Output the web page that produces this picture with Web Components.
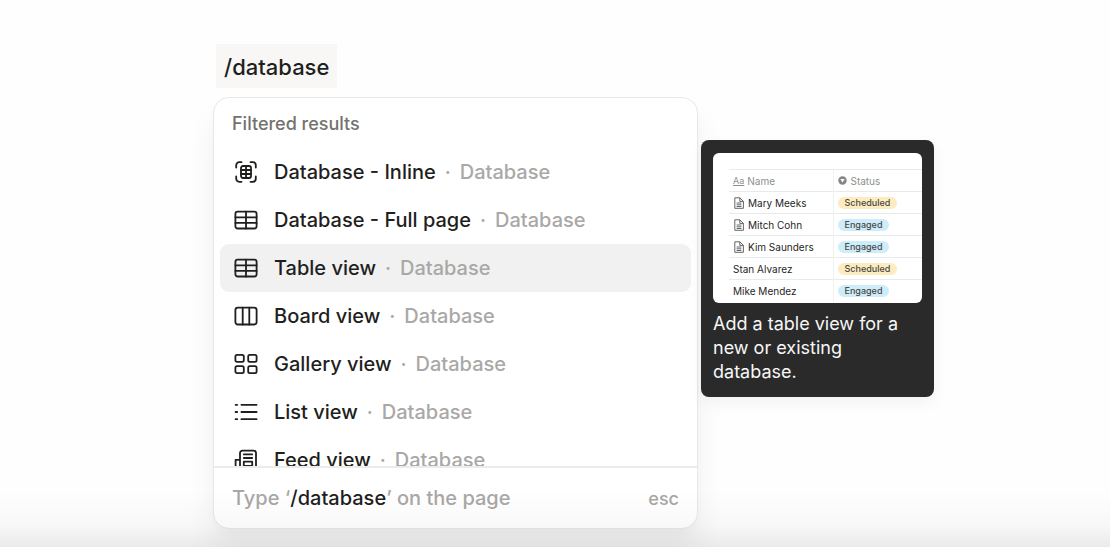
<!DOCTYPE html>
<html lang="en">
<head>
<meta charset="utf-8">
<meta name="viewport" content="width=device-width, initial-scale=1">
<title>Slash command menu</title>
<style>
body { margin: 0; background: #fefefe; font-family: Inter, "Liberation Sans", sans-serif; color: #1f1f1e; }
</style>
</head>
<body>
<editor-page>
  <slash-command slot="command">/database</slash-command>
  <command-menu heading="Filtered results">
    <menu-option icon="inline" hint="Database">Database - Inline</menu-option>
    <menu-option icon="table" hint="Database">Database - Full page</menu-option>
    <menu-option icon="table" hint="Database" active>Table view</menu-option>
    <menu-option icon="board" hint="Database">Board view</menu-option>
    <menu-option icon="gallery" hint="Database">Gallery view</menu-option>
    <menu-option icon="list" hint="Database">List view</menu-option>
    <menu-option icon="feed" hint="Database">Feed view</menu-option>
    <span slot="footer">Type ‘<b>/database</b>’ on the page</span>
    <span slot="key">esc</span>
  </command-menu>
  <preview-card slot="preview">
    <preview-table slot="picture"></preview-table>
    Add a table view for a new or existing database.
  </preview-card>
</editor-page>

<script>
const define = (name, html, setup) => {
  const template = document.createElement('template');
  template.innerHTML = html;
  customElements.define(name, class extends HTMLElement {
    constructor() {
      super();
      this.attachShadow({ mode: 'open' }).append(template.content.cloneNode(true));
    }
    connectedCallback() {
      if (setup) setup(this, this.shadowRoot);
    }
  });
};

const svg = (body) => `<svg viewBox="0 0 24 24" width="24" height="24" fill="none" stroke="currentColor" stroke-width="1.8" stroke-linecap="round" stroke-linejoin="round" aria-hidden="true">${body}</svg>`;

const icons = {
  inline: svg('<path d="M7.5 2.2H5.2a3 3 0 0 0-3 3v2.3M16.5 2.2h2.3a3 3 0 0 1 3 3v2.3M7.5 21.8H5.2a3 3 0 0 1-3-3v-2.3M16.5 21.8h2.3a3 3 0 0 0 3-3v-2.3"/><rect x="7" y="6" width="10" height="12" rx="2"/><path d="M12 6v12M7 10h10M7 14h10"/>'),
  table: svg('<rect x="1.4" y="3.7" width="21.2" height="16.8" rx="2.2"/><path d="M12 3.7v16.8M1.4 9.3h21.2M1.4 14.9h21.2"/>'),
  board: svg('<rect x="1.4" y="3.7" width="21.2" height="16.8" rx="2.4"/><path d="M8.7 3.7v16.8M15.3 3.7v16.8"/>'),
  gallery: svg('<rect x="1.4" y="2.8" width="8.4" height="7" rx="1.6"/><rect x="14.2" y="2.8" width="8.4" height="7" rx="1.6"/><rect x="1.4" y="14.2" width="8.4" height="7" rx="1.6"/><rect x="14.2" y="14.2" width="8.4" height="7" rx="1.6"/>'),
  list: svg('<path d="M1.6 4.8h1.6M1.6 12h1.6M1.6 19.2h1.6M7.4 4.8h15.2M7.4 12h15.2M7.4 19.2h15.2"/>'),
  feed: svg('<path d="M6 20V5a2.4 2.4 0 0 1 2.4-2.4h11.2A2.4 2.4 0 0 1 22 5v14a2.4 2.4 0 0 1-2.4 2.4H4a2.4 2.4 0 0 1-2.4-2.4v-7.2h4.2"/><path d="M9.8 6.4h8.4M9.8 10h8.4"/><rect x="9.8" y="13.6" width="8.4" height="4.4"/>')
};

define('editor-page', `
  <style>
    :host { display: block; box-sizing: border-box; min-height: 100vh; padding: 44px 176px 18px 213px; }
    .command { padding-left: 3px; margin-bottom: 9px; }
    .row { display: flex; align-items: flex-start; gap: 3px; }
    ::slotted(command-menu) { flex: 1; min-width: 0; }
    ::slotted(preview-card) { flex: none; margin-top: 43px; }
    .fade { position: fixed; inset: auto 0 0 0; height: 56px; pointer-events: none; z-index: 2;
      background: linear-gradient(rgba(0,0,0,0), rgba(0,0,0,.025) 60%, rgba(0,0,0,.08)); }
  </style>
  <main>
    <div class="command"><slot name="command"></slot></div>
    <div class="row"><slot></slot><slot name="preview"></slot></div>
  </main>
  <div class="fade"></div>`);

define('slash-command', `
  <style>
    :host { display: flex; }
    span { background: #f8f7f6; padding: 9px 8px 7px; font-size: 22px; line-height: 28px; font-weight: 500; }
  </style>
  <span><slot></slot></span>`);

define('command-menu', `
  <style>
    :host { display: block; }
    section { box-sizing: border-box; border: 1px solid #e8e8e7; border-radius: 16px; background: #fff; overflow: hidden;
      box-shadow: 0 20px 30px rgba(0,0,0,.06), 0 4px 10px rgba(0,0,0,.02); }
    h2 { margin: 0; padding: 14px 18px 12px; font-size: 18px; line-height: 24px; font-weight: 500; color: #73726e; }
    .list { height: 318px; overflow: hidden; padding: 0 6px; }
    footer { display: flex; justify-content: space-between; align-items: center; padding: 16px 18px 15px; border-top: 2px solid #ececeb;
      color: #a9a8a6; font-size: 20px; line-height: 29px; font-weight: 450; }
    ::slotted([slot=key]) { font-size: 18px; }
  </style>
  <section>
    <h2></h2>
    <div class="list" role="menu"><slot></slot></div>
    <footer><slot name="footer"></slot><slot name="key"></slot></footer>
  </section>`, (host, root) => {
  root.querySelector('h2').textContent = host.getAttribute('heading');
  const strong = host.querySelector('b');
  strong.style.fontWeight = '500';
  strong.style.color = '#1f1f1e';
});

define('menu-option', `
  <style>
    :host { display: block; }
    button { display: flex; align-items: center; width: 100%; height: 48px; padding: 0 14px; border: 0; border-radius: 9px;
      background: none; font: inherit; font-size: 20px; line-height: 28px; font-weight: 450; color: inherit; text-align: left; }
    :host([active]) button { background: #f1f1f1; }
    .icon { display: flex; margin-right: 16px; }
    .dot { width: 24px; text-align: center; color: #a9a8a6; }
    .hint { color: #a9a8a6; }
  </style>
  <button type="button" role="menuitem"><span class="icon"></span><slot></slot><span class="dot">·</span><span class="hint"></span></button>`,
  (host, root) => {
    root.querySelector('.icon').innerHTML = icons[host.getAttribute('icon')];
    root.querySelector('.hint').textContent = host.getAttribute('hint');
  });

define('preview-card', `
  <style>
    :host { display: block; box-sizing: border-box; width: 233px; padding: 13px 12px; border-radius: 8px; background: #2a2a2a;
      color: #f7f7f7; box-shadow: 0 6px 16px rgba(0,0,0,.05); }
    p { margin: 9px 0 0; font-size: 18px; line-height: 24px; }
  </style>
  <slot name="picture"></slot>
  <p><slot></slot></p>`);

define('preview-table', `
  <style>
    :host { display: block; overflow: hidden; height: 150px; border-radius: 6px; background: #fff; }
    table { width: calc(100% - 16px); margin: 16px 0 0 16px; border-collapse: collapse; table-layout: fixed; font-size: 10px; line-height: 12px; color: #1f1f1e; }
    th, td { box-sizing: border-box; height: 22px; padding: 0 4px; border-top: 1px solid #e6ebeb; text-align: left; font-weight: 400; white-space: nowrap; }
    th { color: #8f8f8d; }
    th:first-child { width: 104px; }
    th + th, td + td { border-left: 1px solid #f0f2f2; }
    .cell { display: flex; align-items: center; gap: 3px; }
    th + th .cell { gap: 4px; }
    .tag { display: inline-block; padding: 0 7px; border-radius: 6px; font-size: 9px; font-weight: 500; color: #4a4844; }
    .Scheduled { background: #fcecbf; }
    .Engaged { background: #cdedfb; }
    svg { flex: none; }
    u { font-size: 9px; }
  </style>
  <table>
    <thead><tr><th><span class="cell"><u>Aa</u>Name</span></th>
    <th><span class="cell"><svg viewBox="0 0 9 9" width="9" height="9"><circle cx="4.5" cy="4.5" r="4.2" fill="#858583"/><path d="M2.3 3.1h4.4L4.5 6.6z" fill="#fff"/></svg>Status</span></th></tr></thead>
    <tbody></tbody>
  </table>`, (host, root) => {
  const page = '<svg viewBox="0 0 12 12" width="12" height="12" fill="none" stroke="#555" stroke-width=".9"><path d="M1.8.8h5l3.6 3.6v6.9H1.8zM6.8.8v3.6h3.6M3.6 6h4.8M3.6 7.8h4.8M3.6 9.5h4.8"/></svg>';
  const people = [['Mary Meeks', 'Scheduled', 1], ['Mitch Cohn', 'Engaged', 1], ['Kim Saunders', 'Engaged', 1], ['Stan Alvarez', 'Scheduled', 0], ['Mike Mendez', 'Engaged', 0]];
  root.querySelector('tbody').innerHTML = people.map(([name, status, hasPage]) =>
    `<tr><td><span class="cell">${hasPage ? page : ''}<span>${name}</span></span></td><td><span class="tag ${status}">${status}</span></td></tr>`).join('');
});
</script>
</body>
</html>
